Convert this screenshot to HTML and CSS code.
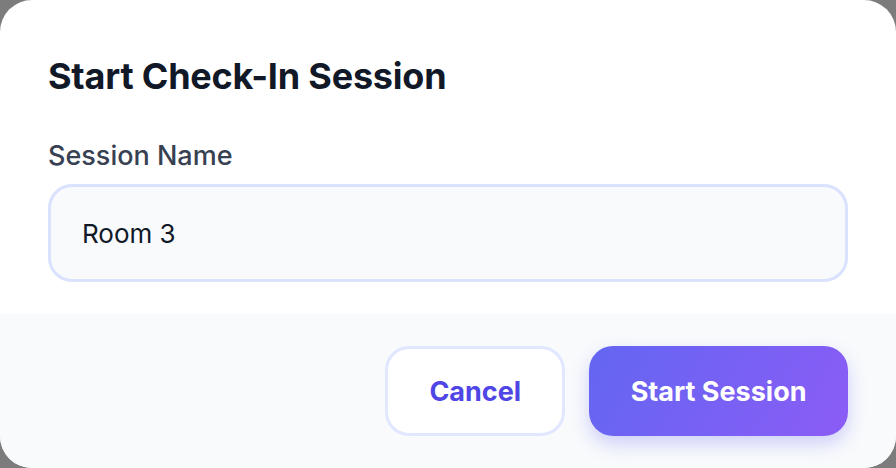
FILE: index.html
```html
<!DOCTYPE html>
<html lang="en">
<head>
<meta charset="utf-8">
<title>Start Check-In Session</title>
<link rel="stylesheet" href="styles.css">
</head>
<body>
<div class="dialog">
  <div class="dialog-body">
    <h2 class="dialog-title">Start Check-In Session</h2>
    <label class="field-label" for="session-name">Session Name</label>
    <input class="field-input" id="session-name" type="text" value="Room 3">
  </div>
  <div class="dialog-footer">
    <button class="btn btn-secondary" type="button">Cancel</button>
    <button class="btn btn-primary" type="button">Start Session</button>
  </div>
</div>
</body>
</html>
```
FILE: styles.css
```css
html, body {
  margin: 0;
  padding: 0;
  height: 100%;
}
body {
  background: #7c7c7c;
  font-family: Inter, "Noto Sans", "DejaVu Sans", sans-serif;
}
.dialog {
  width: 896px;
  height: 468px;
  background: #ffffff;
  border-radius: 32px;
  overflow: hidden;
  display: flex;
  flex-direction: column;
}
.dialog-body {
  padding: 48px 48px 32px;
  display: flex;
  flex-direction: column;
}
.dialog-title {
  margin: 0;
  font-size: 36px;
  line-height: 56px;
  font-weight: 700;
  color: #111827;
  letter-spacing: -0.2px;
}
.field-label {
  margin-top: 32px;
  margin-bottom: 8px;
  font-size: 27px;
  line-height: 40px;
  font-weight: 500;
  color: #374151;
}
.field-input {
  box-sizing: border-box;
  height: 98px;
  width: 100%;
  border: 3px solid #dae2fd;
  border-radius: 24px;
  background: #f8fafc;
  padding: 0 31px;
  font-family: inherit;
  font-size: 26px;
  color: #111827;
  outline: none;
}
.dialog-footer {
  flex: 1;
  background: #f8fafc;
  padding: 32px 48px 32px;
  display: flex;
  justify-content: flex-end;
  align-items: flex-start;
  gap: 24px;
}
.btn {
  box-sizing: border-box;
  height: 90px;
  border-radius: 24px;
  font-family: inherit;
  font-size: 27px;
  font-weight: 700;
  cursor: pointer;
}
.btn-secondary {
  background: #ffffff;
  border: 3px solid #e0e7ff;
  color: #4f46e5;
  padding: 0 41px;
}
.btn-primary {
  border: none;
  color: #ffffff;
  padding: 0 41.5px;
  background: linear-gradient(120deg, #6366f1 0%, #8b5cf6 100%);
  box-shadow: 0 8px 18px rgba(99, 102, 241, 0.28);
}
```
